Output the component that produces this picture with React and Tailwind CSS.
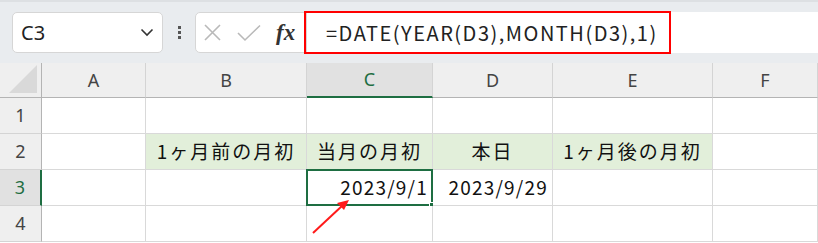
import React from "react";

const cols = ["A", "B", "C", "D", "E", "F"];

const HeaderCell = ({ label, active }) => (
  <div
    className={
      "flex items-center justify-center border-r border-[#d4d4d4] text-[18px] " +
      (active
        ? "bg-[#e1e1e1] text-[#1e6e42] border-b-2 border-b-[#1e6e42]"
        : "bg-[#efefef] text-[#444] border-b border-b-[#b4b4b4]")
    }
    style={{ fontFamily: "'Noto Sans', sans-serif" }}
  >
    {label}
  </div>
);

const RowHead = ({ n, active }) => (
  <div
    className={
      "flex items-center justify-center border-b border-[#d4d4d4] text-[18px] " +
      (active
        ? "bg-[#e1e1e1] text-[#1e6e42] border-r-2 border-r-[#1e6e42]"
        : "bg-[#efefef] text-[#444] border-r border-r-[#b4b4b4]")
    }
    style={{ fontFamily: "'Noto Sans', sans-serif" }}
  >
    {n}
  </div>
);

const Cell = ({ children, green, align = "center", selected }) => (
  <div
    className={
      "relative flex items-center border-r border-b border-[#d9d9d9] text-[19px] text-[#111] px-1 " +
      (green ? "bg-[#e2efda] " : "bg-white ") +
      (align === "right" ? "justify-end" : "justify-center")
    }
  >
    <span className={align === "right" ? "tracking-[1.2px]" : "tracking-[2px]"}>{children}</span>
    {selected && (
      <>
        <div className="absolute -left-px -top-px -right-px -bottom-px border-2 border-[#1e6e42]"></div>
        <div className="absolute -right-[4px] -bottom-[4px] w-[7px] h-[7px] bg-[#1e6e42] border border-white"></div>
      </>
    )}
  </div>
);

const App = () => {
  const rows = [
    ["", "", "", "", "", ""],
    ["", "1ヶ月前の月初", "当月の月初", "本日", "1ヶ月後の月初", ""],
    ["", "", "2023/9/1", "2023/9/29", "", ""],
    ["", "", "", "", "", ""],
  ];
  return (
    <div
      className="relative w-[818px] h-[243px] overflow-hidden bg-white"
      style={{ fontFamily: "'Noto Sans CJK JP', 'Noto Sans', sans-serif" }}
    >
      {/* formula bar */}
      <div className="h-[63px] bg-[#e9ecef] border-t-2 border-[#dde0e3] flex items-center pl-[12px]">
        <div className="w-[151px] h-[41px] bg-white rounded-[5px] border border-[#d6d6d6] flex items-center justify-between pl-[8px] pr-[8px]">
          <span className="text-[20px] text-[#222]" style={{ fontFamily: "'Noto Sans', sans-serif" }}>
            C3
          </span>
          <svg width="14" height="9" viewBox="0 0 14 9">
            <path d="M1.5 1.5 L7 7 L12.5 1.5" fill="none" stroke="#333" strokeWidth="1.6" />
          </svg>
        </div>
        <div className="w-[32px] flex flex-col items-center gap-[2px]">
          <div className="w-[3px] h-[3px] bg-[#555]"></div>
          <div className="w-[3px] h-[3px] bg-[#555]"></div>
          <div className="w-[3px] h-[3px] bg-[#555]"></div>
        </div>
        <div className="w-[112px] h-[41px] bg-white rounded-l-[5px] border border-[#d6d6d6] flex items-center pl-[7px] gap-[15px]">
          <svg width="19" height="19" viewBox="0 0 19 19">
            <path d="M2 2 L17 17 M17 2 L2 17" stroke="#b9b9b9" strokeWidth="1.6" />
          </svg>
          <svg width="24" height="18" viewBox="0 0 24 18">
            <path d="M1 9 L8 16 L23 1.5" fill="none" stroke="#b9b9b9" strokeWidth="1.6" />
          </svg>
          <span
            className="text-[23px] italic font-bold text-[#333] leading-none"
            style={{ fontFamily: "'Liberation Serif', serif" }}
          >
            fx
          </span>
        </div>
        <div className="flex-1 h-[41px] bg-white flex items-center">
          <div className="w-[367px] h-[43px] border-2 border-[#ff0000] flex items-center pl-[20px] ml-[-3px]">
            <span className="text-[20px] text-[#222] tracking-[1.5px]">
              =DATE(YEAR(D3),MONTH(D3),1)
            </span>
          </div>
        </div>
      </div>

      {/* grid */}
      <div className="grid grid-cols-[42px_104px_161px_126px_120px_160px_105px] grid-rows-[35px_36px_36px_36px_36px]">
        <div className="bg-[#efefef] border-r border-b border-[#b4b4b4] flex items-end justify-end p-[4px]">
          <svg width="28" height="28" viewBox="0 0 28 28">
            <path d="M28 0 L28 28 L0 28 Z" fill="#d9d9d9" />
          </svg>
        </div>
        {cols.map((c) => (
          <HeaderCell key={c} label={c} active={c === "C"} />
        ))}
        {rows.map((row, ri) => (
          <React.Fragment key={ri}>
            <RowHead n={ri + 1} active={ri === 2} />
            {row.map((v, ci) => (
              <Cell
                key={ci}
                green={ri === 1 && ci >= 1 && ci <= 4}
                align={ri === 2 ? "right" : "center"}
                selected={ri === 2 && ci === 2}
              >
                {v}
              </Cell>
            ))}
          </React.Fragment>
        ))}
      </div>

      {/* annotation arrow */}
      <svg className="absolute left-0 top-0 pointer-events-none" width="818" height="243">
        <line x1="313" y1="233" x2="343" y2="205" stroke="#ff1a1a" strokeWidth="2" />
        <path d="M349 200 L337 203 L344 210 Z" fill="#ff1a1a" />
      </svg>
    </div>
  );
};

export default App;
